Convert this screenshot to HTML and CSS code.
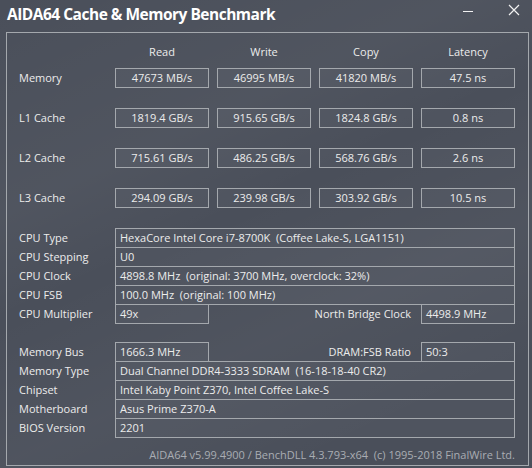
FILE: index.html
```html
<!DOCTYPE html>
<html>
<head>
<meta charset="utf-8">
<link rel="stylesheet" href="styles.css">
</head>
<body>
<div class="window">
  <div class="titlebar">
    <span class="title">AIDA64 Cache &amp; Memory Benchmark</span>
    <div class="controls">
      <svg class="min" width="12" height="12" viewBox="0 0 12 12"><line x1="1" y1="7.5" x2="11" y2="7.5" stroke="#f2f2f2" stroke-width="1"/></svg>
      <svg class="close" width="12" height="12" viewBox="0 0 12 12"><path d="M1 1 L11 11 M11 1 L1 11" stroke="#f2f2f2" stroke-width="1.2" fill="none"/></svg>
    </div>
  </div>
  <div class="frame">
    <div class="head">
      <span class="lbl"></span>
      <span class="hcell">Read</span>
      <span class="hcell">Write</span>
      <span class="hcell">Copy</span>
      <span class="hcell">Latency</span>
    </div>
    <div class="bench">
      <span class="lbl">Memory</span>
      <span class="val">47673 MB/s</span>
      <span class="val">46995 MB/s</span>
      <span class="val">41820 MB/s</span>
      <span class="val">47.5 ns</span>

      <span class="lbl">L1 Cache</span>
      <span class="val">1819.4 GB/s</span>
      <span class="val">915.65 GB/s</span>
      <span class="val">1824.8 GB/s</span>
      <span class="val">0.8 ns</span>

      <span class="lbl">L2 Cache</span>
      <span class="val">715.61 GB/s</span>
      <span class="val">486.25 GB/s</span>
      <span class="val">568.76 GB/s</span>
      <span class="val">2.6 ns</span>

      <span class="lbl">L3 Cache</span>
      <span class="val">294.09 GB/s</span>
      <span class="val">239.98 GB/s</span>
      <span class="val">303.92 GB/s</span>
      <span class="val">10.5 ns</span>
    </div>

    <div class="info cpu">
      <div class="row"><span class="lbl">CPU Type</span><span class="box wide">HexaCore Intel Core i7-8700K&nbsp; (Coffee Lake-S, LGA1151)</span></div>
      <div class="row"><span class="lbl">CPU Stepping</span><span class="box wide">U0</span></div>
      <div class="row"><span class="lbl">CPU Clock</span><span class="box wide">4898.8 MHz&nbsp; (original: 3700 MHz, overclock: 32%)</span></div>
      <div class="row"><span class="lbl">CPU FSB</span><span class="box wide">100.0 MHz&nbsp; (original: 100 MHz)</span></div>
      <div class="row"><span class="lbl">CPU Multiplier</span><span class="box small">49x</span><span class="rlbl">North Bridge Clock</span><span class="box small">4498.9 MHz</span></div>
    </div>

    <div class="info mem">
      <div class="row"><span class="lbl">Memory Bus</span><span class="box small">1666.3 MHz</span><span class="rlbl">DRAM:FSB Ratio</span><span class="box small">50:3</span></div>
      <div class="row"><span class="lbl">Memory Type</span><span class="box wide">Dual Channel DDR4-3333 SDRAM&nbsp; (16-18-18-40 CR2)</span></div>
      <div class="row"><span class="lbl">Chipset</span><span class="box wide">Intel Kaby Point Z370, Intel Coffee Lake-S</span></div>
      <div class="row"><span class="lbl">Motherboard</span><span class="box wide">Asus Prime Z370-A</span></div>
      <div class="row"><span class="lbl">BIOS Version</span><span class="box wide">2201</span></div>
    </div>

    <div class="footer">AIDA64 v5.99.4900 / BenchDLL 4.3.793-x64&nbsp; (c) 1995-2018 FinalWire Ltd.</div>
  </div>
</div>
</body>
</html>
```
FILE: styles.css
```css
* { box-sizing: border-box; }
html, body { margin: 0; padding: 0; }
body {
  width: 532px;
  height: 468px;
  overflow: hidden;
  font-family: "Open Sans", "Noto Sans", sans-serif;
  font-size: 11px;
  color: #ececec;
  background:
    linear-gradient(155deg, rgba(255,255,255,0) 0%, rgba(255,255,255,0.035) 30%, rgba(255,255,255,0) 45%, rgba(255,255,255,0.03) 65%, rgba(255,255,255,0) 85%),
    #4a4f5a;
}
.window { width: 532px; height: 468px; }
.titlebar {
  height: 32px;
  display: flex;
  align-items: flex-start;
  justify-content: space-between;
  padding: 3px 12px 0 7px;
}
.title {
  font-weight: 700;
  font-size: 15.5px;
  color: #ffffff;
  line-height: 22px;
  letter-spacing: -0.5px;
}
.controls { display: flex; gap: 34px; padding-top: 1px; }
.controls svg { display: block; }
.frame {
  margin-left: 6px;
  width: 523px;
  height: 434px;
  border: 1px solid #a4a8ad;
  padding: 9px 13px 0 12px;
}
.head, .bench {
  display: grid;
  grid-template-columns: 88px repeat(4, 94px);
  column-gap: 8px;
}
.head { height: 20px; margin-bottom: 6px; }
.hcell { text-align: center; line-height: 20px; }
.bench { row-gap: 20px; }
.lbl { line-height: 20px; white-space: nowrap; }
.val {
  height: 20px;
  border: 1px solid #a4a8ad;
  background: rgba(255,255,255,0.03);
  text-align: center;
  line-height: 18px;
}
.info { margin-top: 20px; }
.info.mem { margin-top: 18px; }
.row {
  display: flex;
  height: 20px;
  margin-top: -1px;
}
.row:first-child { margin-top: 0; }
.row .lbl { width: 96px; flex: none; }
.box {
  height: 20px;
  border: 1px solid #a4a8ad;
  background: rgba(255,255,255,0.03);
  line-height: 18px;
  padding-left: 4px;
  white-space: nowrap;
}
.box.wide { width: 400px; }
.box.small { width: 94px; }
.rlbl {
  width: 212px;
  text-align: right;
  padding-right: 10px;
  line-height: 20px;
}
.footer {
  margin-top: 8px;
  text-align: right;
  color: #a9adb3;
  line-height: 18px;
}
```
